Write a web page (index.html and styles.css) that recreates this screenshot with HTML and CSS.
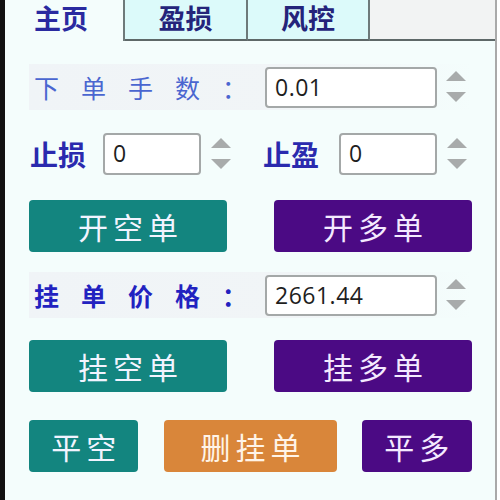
FILE: index.html
```
<!DOCTYPE html>
<html>
<head>
<meta charset="utf-8">
<link rel="stylesheet" href="styles.css">
</head>
<body>
<div class="window">
  <div class="edge"></div>
  <div class="panel">
    <div class="tabs">
      <div class="tab active">主页</div>
      <div class="tab">盈损</div>
      <div class="tab">风控</div>
      <div class="tab-rest"></div>
    </div>
    <div class="content">
      <div class="row r1 shade">
        <div class="label spaced light">下单手数：</div>
        <div class="input wide">0.01</div>
        <svg class="spin" viewBox="0 0 22 34"><path d="M11 1 L21 11 L1 11 Z"/><path d="M1 22 L21 22 L11 32 Z"/></svg>
      </div>
      <div class="row r2">
        <div class="label short">止损</div>
        <div class="input narrow">0</div>
        <svg class="spin" viewBox="0 0 22 34"><path d="M11 1 L21 11 L1 11 Z"/><path d="M1 22 L21 22 L11 32 Z"/></svg>
        <div class="label short second">止盈</div>
        <div class="input narrow b">0</div>
        <svg class="spin" viewBox="0 0 22 34"><path d="M11 1 L21 11 L1 11 Z"/><path d="M1 22 L21 22 L11 32 Z"/></svg>
      </div>
      <div class="row r3">
        <button class="btn teal big">开空单</button>
        <button class="btn purple big">开多单</button>
      </div>
      <div class="row r4 shade">
        <div class="label spaced strong">挂单价格：</div>
        <div class="input wide">2661.44</div>
        <svg class="spin" viewBox="0 0 22 34"><path d="M11 1 L21 11 L1 11 Z"/><path d="M1 22 L21 22 L11 32 Z"/></svg>
      </div>
      <div class="row r5">
        <button class="btn teal big">挂空单</button>
        <button class="btn purple big">挂多单</button>
      </div>
      <div class="row r6">
        <button class="btn teal small">平空</button>
        <button class="btn orange mid">删挂单</button>
        <button class="btn purple small2">平多</button>
      </div>
    </div>
  </div>
</div>
</body>
</html>
```
FILE: styles.css
```
html, body {
  margin: 0;
  padding: 0;
  background: #ffffff;
  font-family: "Noto Sans CJK SC", "Noto Sans", sans-serif;
}
.window {
  display: flex;
  width: 500px;
  height: 500px;
  overflow: hidden;
}
.edge {
  width: 5px;
  background: #111111;
  flex: none;
}
.panel {
  width: 490px;
  background: #f4fdfc;
  border-right: 2px solid #a9a9a9;
  flex: none;
}
.tabs {
  display: flex;
  height: 41px;
}
.tab {
  box-sizing: border-box;
  height: 41px;
  font-size: 27px;
  font-weight: bold;
  color: #24247a;
  text-align: center;
  line-height: 36px;
  background: #dcfafa;
  border-right: 2px solid #6e7a7a;
  border-bottom: 2px solid #5e6868;
}
.tab:nth-child(2) { width: 123px; }
.tab:nth-child(3) { width: 122px; }
.tab.active {
  width: 120px;
  background: #f4fdfc;
  border-bottom: none;
  color: #2a2aa0;
  padding-right: 6px;
}
.tab-rest {
  flex: 1;
  background: #f2f3f3;
  border-bottom: 2px solid #5e6868;
}
.content {
  padding-left: 24px;
  padding-right: 23px;
}
.row {
  display: flex;
  align-items: center;
}
.r1 { margin-top: 23px; height: 46px; }
.r2 { margin-top: 22px; height: 44px; }
.r3 { margin-top: 24px; height: 52px; justify-content: space-between; }
.r4 { margin-top: 20px; height: 46px; }
.r5 { margin-top: 22px; height: 52px; justify-content: space-between; }
.r6 { margin-top: 28px; height: 52px; }
.shade {
  background: linear-gradient(90deg, #f0f4f7 0%, #f1f5f7 60%, #f4fdfc 100%);
}
.label {
  color: #2a2ab4;
}
.spaced {
  box-sizing: border-box;
  width: 236px;
  padding-left: 5px;
  font-size: 25px;
  letter-spacing: 22px;
  white-space: nowrap;
  flex: none;
}
.light { color: #4a66d0; font-weight: normal; }
.strong { color: #2222c0; font-weight: bold; }
.short {
  box-sizing: border-box;
  font-size: 28px;
  font-weight: bold;
  color: #2a2aae;
  padding-left: 1px;
  width: 74px;
  flex: none;
}
.second { margin-left: 30px; width: 77px; }
.input {
  box-sizing: border-box;
  height: 41px;
  background: #ffffff;
  border: 2px solid #a4a8a8;
  border-radius: 4px;
  font-family: "Open Sans", "Noto Sans", sans-serif;
  font-size: 23px;
  letter-spacing: 0.5px;
  color: #1e1e1e;
  line-height: 37px;
  padding-left: 8px;
  flex: none;
}
.wide { width: 172px; }
.narrow { width: 98px; height: 42px; }
.spin {
  width: 22px;
  height: 34px;
  margin-left: 8px;
  fill: #a8abab;
  flex: none;
}
.r2 .spin { margin-left: 9px; }
.btn {
  height: 52px;
  border: none;
  border-radius: 4px;
  font-family: "Noto Sans CJK SC", sans-serif;
  font-size: 30px;
  letter-spacing: 5px;
  color: #f2f4ff;
  padding: 0;
  padding-left: 5px;
  line-height: 52px;
}
.big { width: 198px; }
.teal { background: #13857f; }
.purple { background: #4b0a84; color: #f4eaff; }
.orange { background: #d9863a; color: #fff4e8; }
.small { width: 110px; }
.mid { width: 173px; margin-left: 26px; }
.small2 { width: 111px; margin-left: 25px; }
```
